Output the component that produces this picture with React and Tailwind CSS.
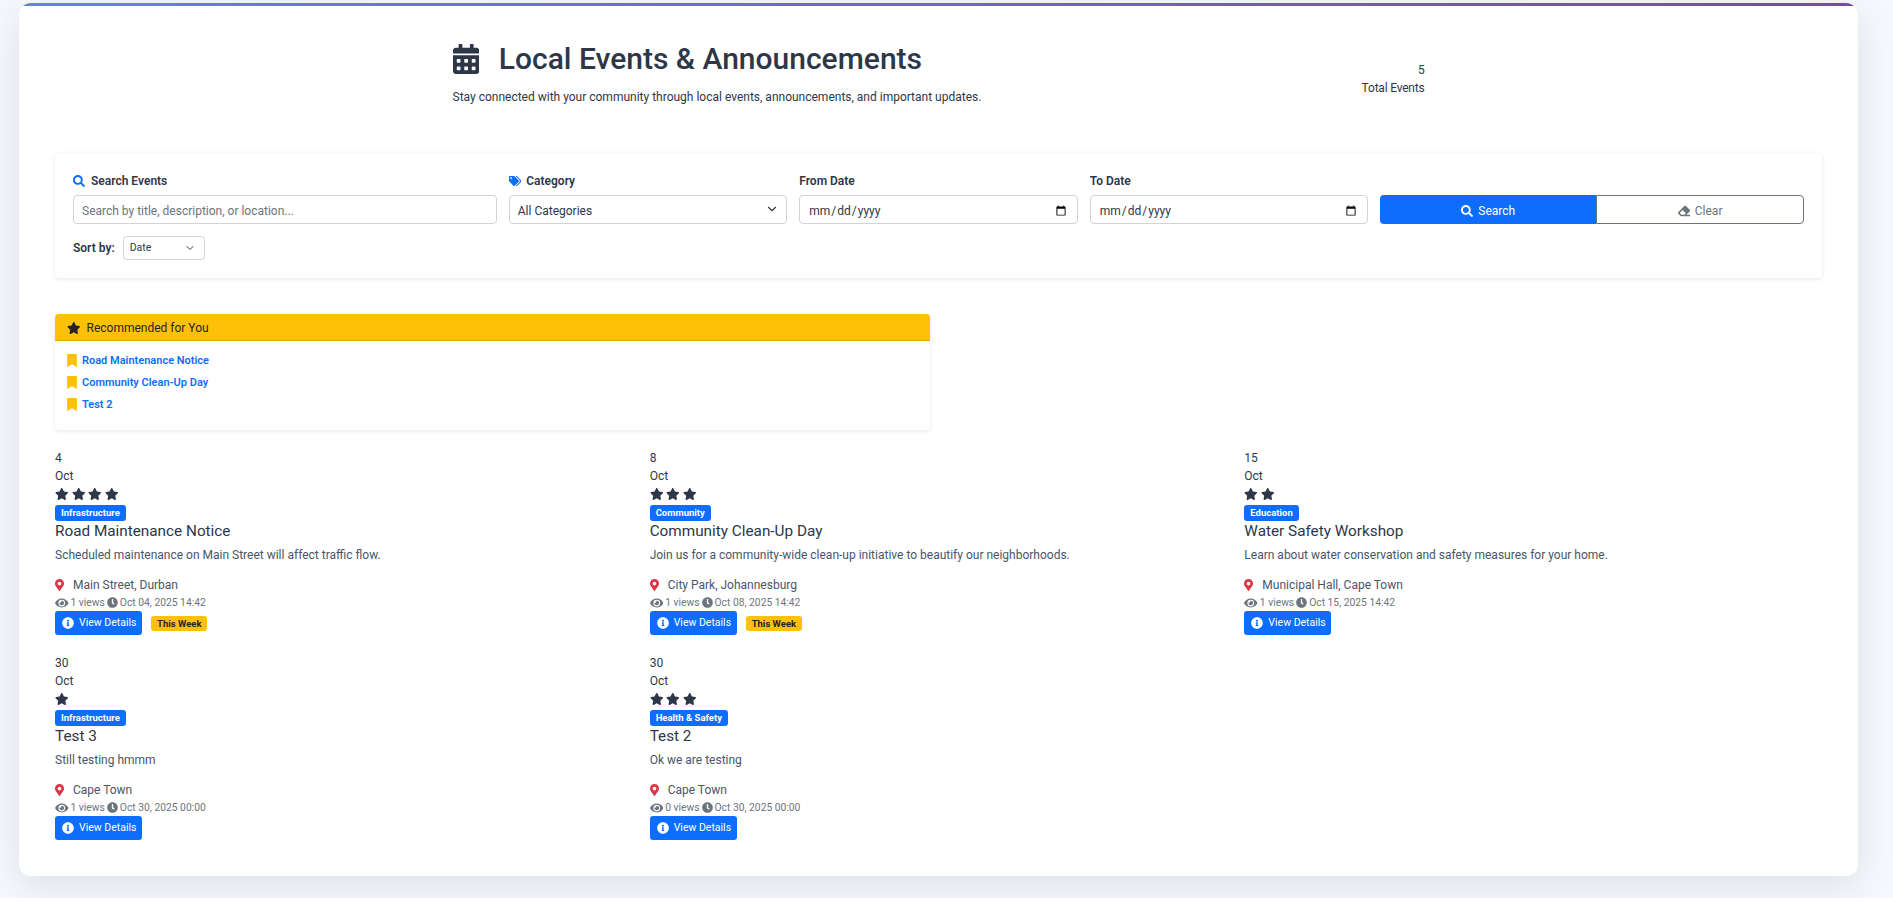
import React from 'react';
import {
  FaBookmark,
  FaCalendarAlt,
  FaClock,
  FaEraser,
  FaEye,
  FaInfoCircle,
  FaMapMarkerAlt,
  FaSearch,
  FaStar,
  FaTags,
} from 'react-icons/fa';
import { ChevronDown } from 'lucide-react';

const events = [
  { day: 4, stars: 4, category: 'Infrastructure', title: 'Road Maintenance Notice', text: 'Scheduled maintenance on Main Street will affect traffic flow.', place: 'Main Street, Durban', views: 1, date: 'Oct 04, 2025 14:42', soon: true },
  { day: 8, stars: 3, category: 'Community', title: 'Community Clean-Up Day', text: 'Join us for a community-wide clean-up initiative to beautify our neighborhoods.', place: 'City Park, Johannesburg', views: 1, date: 'Oct 08, 2025 14:42', soon: true },
  { day: 15, stars: 2, category: 'Education', title: 'Water Safety Workshop', text: 'Learn about water conservation and safety measures for your home.', place: 'Municipal Hall, Cape Town', views: 1, date: 'Oct 15, 2025 14:42', soon: false },
  { day: 30, stars: 1, category: 'Infrastructure', title: 'Test 3', text: 'Still testing hmmm', place: 'Cape Town', views: 1, date: 'Oct 30, 2025 00:00', soon: false },
  { day: 30, stars: 3, category: 'Health & Safety', title: 'Test 2', text: 'Ok we are testing', place: 'Cape Town', views: 0, date: 'Oct 30, 2025 00:00', soon: false },
];

const recommended = ['Road Maintenance Notice', 'Community Clean-Up Day', 'Test 2'];

const fieldClass = 'w-full h-[29px] px-2 pt-[2px] bg-white border border-[#ced4da] rounded text-[12px] text-[#2d3748] outline-none';

function EventCard({ event }) {
  return (
    <div className="h-[186px]">
      <div>{event.day}</div>
      <div>Oct</div>
      <div className="flex items-center gap-[3.2px] h-[17px] mb-[3px]">
        {Array.from({ length: event.stars }).map((_, i) => (
          <FaStar key={i} className="w-[13.5px] h-[12px]" />
        ))}
      </div>
      <div className="flex h-[16px]">
        <span className="px-[6px] h-[16px] leading-[16px] rounded-[3px] bg-[#0d6efd] text-white text-[9.5px] font-bold">{event.category}</span>
      </div>
      <h5 className="text-[15.3px] leading-[19px] font-normal pt-[1px] mb-[5px]">{event.title}</h5>
      <p className="mb-3 text-[#4a5568]">{event.text}</p>
      <div className="flex items-center text-[#4a5568]">
        <FaMapMarkerAlt className="w-[9px] h-[12px] text-[#dc3545] mr-[9px]" />
        <span>{event.place}</span>
      </div>
      <div className="flex items-center h-[17px] text-[10.3px] text-[#6c757d]">
        <FaEye className="w-[13.5px] h-[12px] mr-[2px]" />
        <span>{event.views} views</span>
        <FaClock className="w-[11px] h-[11px] ml-[2px] mr-[2px]" />
        <span>{event.date}</span>
      </div>
      <div className="flex items-center gap-[9px]">
        <button className="flex items-center gap-[5px] h-[24px] w-[87px] pl-[7px] rounded-[3px] bg-[#0d6efd] text-white text-[10.5px]">
          <FaInfoCircle className="w-[12px] h-[12px]" />
          View Details
        </button>
        {event.soon && (
          <span className="px-[6px] h-[15px] leading-[15px] rounded-[3px] bg-[#ffc107] text-[#212529] text-[9.5px] font-bold">This Week</span>
        )}
      </div>
    </div>
  );
}

export default function App() {
  return (
    <div className="min-h-[898px] pt-[3px] pl-[19px] pr-[35px] bg-[#f5f8fc] text-[12px] leading-[18px] text-[#2d3748] font-['Roboto',sans-serif]">
      <div className="relative h-[873px] overflow-hidden rounded-xl bg-white shadow-[0_10px_40px_rgba(0,0,0,0.1)]">
        {/* Top gradient stripe */}
        <div className="h-[3px] bg-gradient-to-r from-[#667eea] to-[#764ba2]" />

        <div className="px-9 pt-[35px]">
          {/* Page header */}
          <div className="flex justify-between w-[972px] mx-auto h-[112px]">
            <div>
              <h1 className="flex items-center h-[36px] text-[30px] leading-[36px] font-medium mb-[11px]">
                <FaCalendarAlt className="w-[26.25px] h-[30px] mr-[20px]" />
                Local Events &amp; Announcements
              </h1>
              <p>Stay connected with your community through local events, announcements, and important updates.</p>
            </div>
            <div className="pt-[20px] text-right tracking-[-0.2px]">
              <div>5</div>
              <div>Total Events</div>
            </div>
          </div>

          {/* Filters */}
          <div className="p-[18px] rounded bg-white shadow-[0_1px_4px_rgba(0,0,0,0.1)] mb-9">
            <div className="grid grid-cols-12 gap-x-3 mb-3">
              <div className="col-span-3">
                <label className="flex items-center gap-[6px] pt-[1px] mb-[5px] font-semibold">
                  <FaSearch className="w-[12px] h-[12px] text-[#0d6efd]" /> Search Events
                </label>
                <input className={`${fieldClass} placeholder:text-[#6c757d]`} placeholder="Search by title, description, or location..." />
              </div>
              <div className="col-span-2">
                <label className="flex items-center gap-[5px] pt-[1px] mb-[5px] font-semibold">
                  <FaTags className="w-[12.5px] h-[12px] text-[#0d6efd]" /> Category
                </label>
                <div className="relative">
                  <select className={`${fieldClass} appearance-none`}>
                    <option>All Categories</option>
                  </select>
                  <ChevronDown className="absolute right-[8px] top-[7px] w-[14px] h-[14px] text-[#343a40]" />
                </div>
              </div>
              <div className="col-span-2">
                <label className="block pt-[1px] mb-[5px] font-semibold">From Date</label>
                <input type="date" className={fieldClass} />
              </div>
              <div className="col-span-2">
                <label className="block pt-[1px] mb-[5px] font-semibold">To Date</label>
                <input type="date" className={fieldClass} />
              </div>
              <div className="col-span-3 flex items-end">
                <div className="flex w-full h-[29px]">
                  <button className="w-[216px] flex items-center justify-center gap-[5px] pt-[2px] rounded-l bg-[#0d6efd] text-white">
                    <FaSearch className="w-[12px] h-[12px]" /> Search
                  </button>
                  <button className="flex-1 flex items-center justify-center gap-[5px] pt-[2px] rounded-r border border-[#6c757d] text-[#6c757d]">
                    <FaEraser className="w-[12px] h-[12px]" /> Clear
                  </button>
                </div>
              </div>
            </div>
            <div className="flex items-center gap-[8px]">
              <span className="font-semibold">Sort by:</span>
              <div className="relative w-[82px]">
                <select className="w-full h-[24px] pl-[6px] pb-[1px] bg-white border border-[#ced4da] rounded text-[10.5px] outline-none appearance-none">
                  <option>Date</option>
                </select>
                <ChevronDown className="absolute right-[9px] top-[6px] w-[12px] h-[12px] text-[#343a40]" />
              </div>
            </div>
          </div>

          {/* Recommended */}
          <div className="w-[875px] h-[116px] rounded overflow-hidden bg-white shadow-[0_1px_4px_rgba(0,0,0,0.1)] mb-[19px]">
            <div className="flex items-center gap-[6px] h-[27px] px-3 pt-[1px] bg-[#ffc107] border-b border-[#e0ab06] text-[#212529]">
              <FaStar className="w-[13.5px] h-[12px]" /> Recommended for You
            </div>
            <ul className="pt-[9px] px-3">
              {recommended.map((name) => (
                <li key={name} className="flex items-center gap-[5px] h-[22px] text-[#0d6efd] text-[11px] font-semibold">
                  <FaBookmark className="w-[10px] h-[13px] text-[#ffc107] -mt-[1px]" />
                  {name}
                </li>
              ))}
            </ul>
          </div>

          {/* Events */}
          <div className="grid grid-cols-3 gap-x-[17px] gap-y-[19px]">
            {events.map((event) => (
              <EventCard key={event.title} event={event} />
            ))}
          </div>
        </div>
      </div>
    </div>
  );
}
